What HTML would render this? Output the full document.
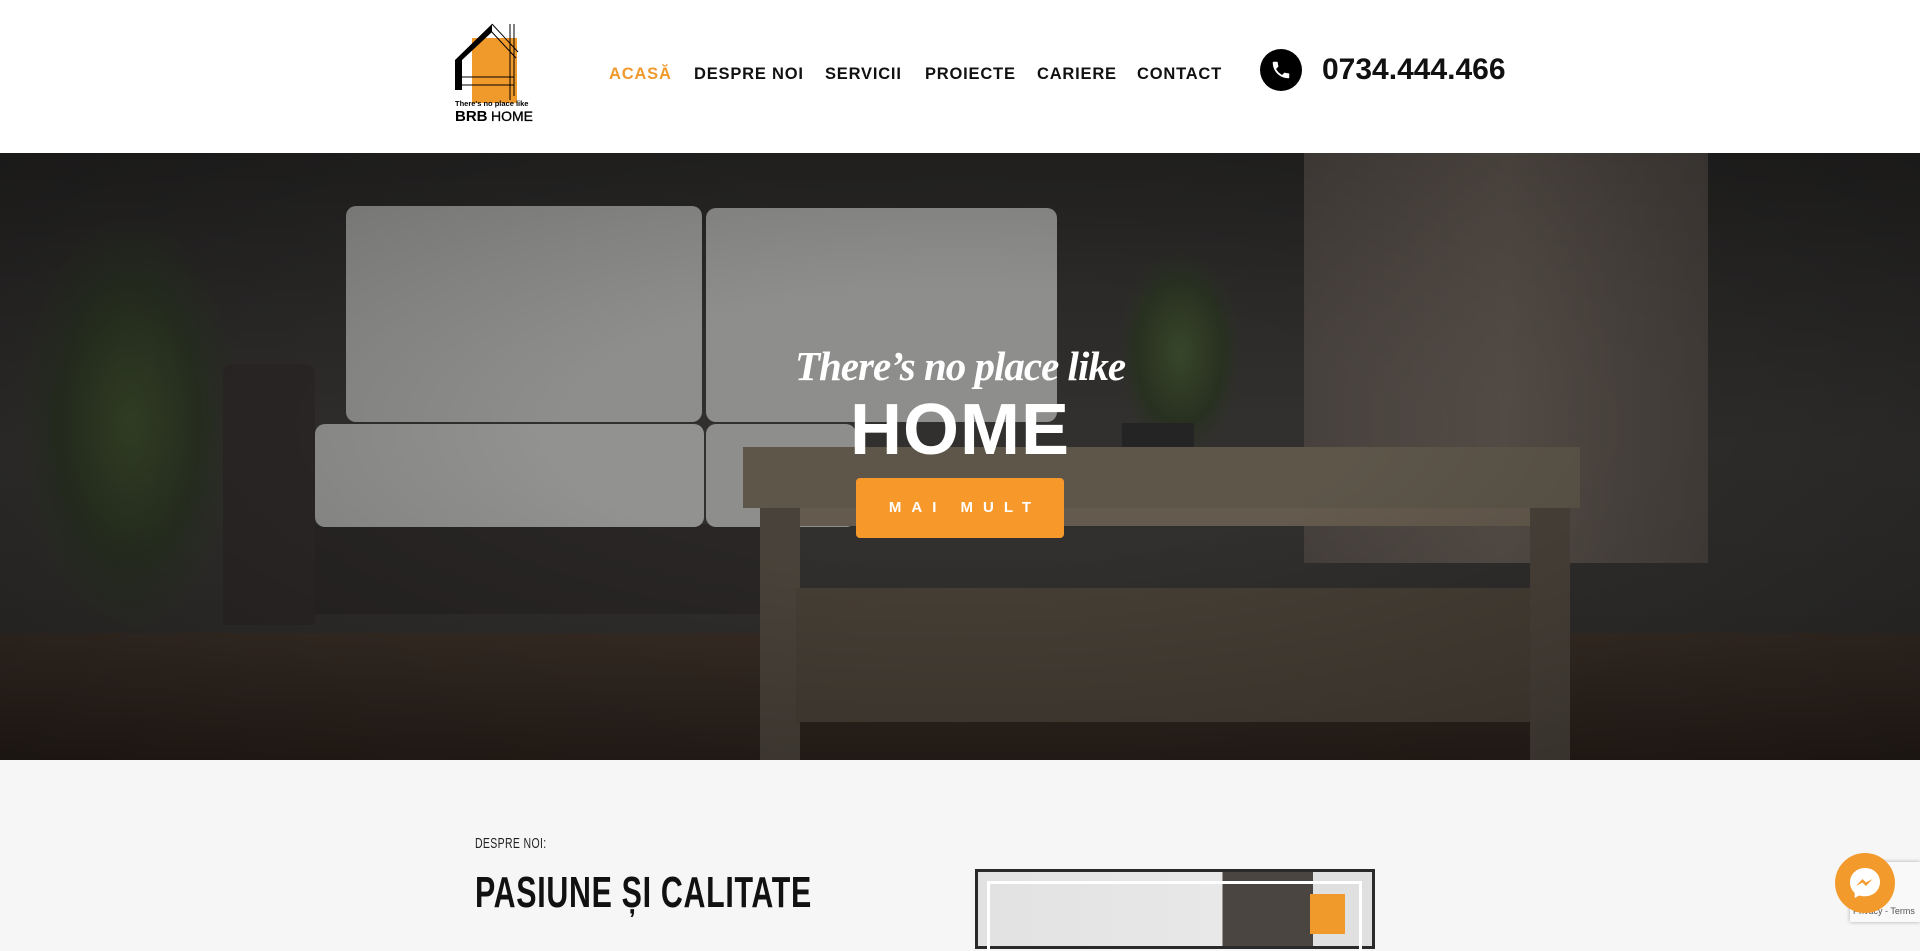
<!DOCTYPE html>
<html><head><meta charset="utf-8">
<style>
*{margin:0;padding:0;box-sizing:border-box}
body{width:1920px;height:938px;overflow:hidden;background:#f6f6f6;font-family:"Liberation Sans",sans-serif;position:relative}
.abs{position:absolute}
header{position:absolute;left:0;top:0;width:1920px;height:153px;background:#fff}
nav a{position:absolute;top:65px;font-size:16.5px;font-weight:bold;color:#111;letter-spacing:.8px;text-decoration:none}
.hero{position:absolute;left:0;top:153px;width:1920px;height:607px;overflow:hidden;background:#383634}
</style></head><body>
<header>
 <svg class="abs" style="left:452px;top:20px" width="88" height="106" viewBox="0 0 88 106">
  <rect x="20" y="18" width="45" height="65" fill="#f09a2c"/>
  <path d="M3 40 L40 4 L40 12 L10 40 L10 70 L3 70 Z" fill="#000"/>
  <path d="M40 4 L66 32 M38 10 L64 38" stroke="#000" stroke-width="1"/>
  <line x1="58" y1="4" x2="58" y2="80" stroke="#000" stroke-width="1"/>
  <line x1="62" y1="4" x2="62" y2="76" stroke="#000" stroke-width="1"/>
  <line x1="8" y1="57" x2="62" y2="57" stroke="#000" stroke-width="1"/>
  <line x1="8" y1="65" x2="62" y2="65" stroke="#000" stroke-width="1"/>
  <text x="3" y="86" font-size="7.5" font-weight="bold" font-family="Liberation Sans" fill="#000">There's no place like</text>
  <text x="3" y="101" font-size="15" font-weight="bold" font-family="Liberation Sans" fill="#000">BRB</text>
  <text x="39" y="101" font-size="14" font-family="Liberation Sans" fill="#000" stroke="#000" stroke-width=".3">HOME</text>
 </svg>
 <nav>
  <a style="left:609px;color:#f09a2c">ACASĂ</a>
  <a style="left:694px">DESPRE NOI</a>
  <a style="left:825px">SERVICII</a>
  <a style="left:925px">PROIECTE</a>
  <a style="left:1037px">CARIERE</a>
  <a style="left:1137px">CONTACT</a>
 </nav>
 <div class="abs" style="left:1260px;top:49px;width:42px;height:42px;border-radius:50%;background:#000"></div>
 <svg class="abs" style="left:1270px;top:59px" width="22" height="22" viewBox="0 0 24 24"><path fill="#fff" d="M6.6 10.8c1.4 2.8 3.8 5.1 6.6 6.6l2.2-2.2c.3-.3.7-.4 1-.2 1.1.4 2.3.6 3.6.6.6 0 1 .4 1 1V20c0 .6-.4 1-1 1C10.6 21 3 13.4 3 4c0-.6.4-1 1-1h3.5c.6 0 1 .4 1 1 0 1.3.2 2.5.6 3.6.1.3 0 .7-.2 1z"/></svg>
 <div class="abs" style="left:1322px;top:53px;font-size:30px;font-weight:bold;color:#111">0734.444.466</div>
</header>
<div class="hero">
 <div class="abs" style="left:0;top:0;width:1920px;height:485px;background:linear-gradient(#262524,#353331 60%,#32302e)"></div>
 <div class="abs" style="left:0;top:480px;width:1920px;height:127px;background:linear-gradient(#3a2f27,#2a211b)"></div>
 <div class="abs" style="left:1304px;top:0;width:404px;height:410px;background:linear-gradient(90deg,#4a4440,#5a524b,#4a4440)"></div>
 <div class="abs" style="left:20px;top:60px;width:220px;height:420px;background:radial-gradient(ellipse,#3a4a2a 0%,#2c3424 45%,transparent 70%)"></div>
 <div class="abs" style="left:223px;top:211px;width:92px;height:261px;background:#2e2a29;border-radius:10px 10px 0 0"></div>
 <div class="abs" style="left:315px;top:371px;width:480px;height:90px;background:#2b2827"></div>
 <div class="abs" style="left:346px;top:53px;width:356px;height:216px;background:#959593;border-radius:10px"></div>
 <div class="abs" style="left:706px;top:55px;width:351px;height:214px;background:#959593;border-radius:10px"></div>
 <div class="abs" style="left:315px;top:271px;width:389px;height:103px;background:#9a9a98;border-radius:10px"></div>
 <div class="abs" style="left:706px;top:271px;width:150px;height:103px;background:#969694;border-radius:10px"></div>
 <div class="abs" style="left:1120px;top:100px;width:120px;height:200px;background:radial-gradient(ellipse,#3a4a2c 0%,#2a3322 50%,transparent 72%)"></div>
 <div class="abs" style="left:1122px;top:270px;width:72px;height:62px;background:#262626"></div>
 <div class="abs" style="left:743px;top:294px;width:837px;height:61px;background:#625a4d"></div>
 <div class="abs" style="left:796px;top:355px;width:734px;height:18px;background:#6a5f52"></div>
 <div class="abs" style="left:760px;top:355px;width:40px;height:252px;background:#4d463d"></div>
 <div class="abs" style="left:1530px;top:355px;width:40px;height:252px;background:#4d463d"></div>
 <div class="abs" style="left:796px;top:435px;width:734px;height:134px;background:#4a4238"></div>
 <div class="abs" style="left:0;top:0;width:1920px;height:607px;background:radial-gradient(ellipse at 50% 45%,rgba(0,0,0,.05) 30%,rgba(0,0,0,.35) 100%)"></div>
 <div class="abs" style="left:0;top:189px;width:1920px;text-align:center;color:#fff;font-family:'Liberation Serif',serif;font-style:italic;font-weight:bold;font-size:41px;letter-spacing:-1px">There’s no place like</div>
 <div class="abs" style="left:0;top:236px;width:1920px;text-align:center;color:#fff;font-weight:bold;font-size:72px;letter-spacing:1px">HOME</div>
 <div class="abs" style="left:856px;top:325px;width:208px;height:60px;background:#f7982b;border-radius:4px;color:#fff;font-weight:bold;font-size:15px;letter-spacing:10px;text-align:center;line-height:60px;padding-left:10px">MAI MULT</div>
</div>
<div class="abs" style="left:475px;top:835px;font-size:15px;color:#222;transform:scaleX(.7);transform-origin:left;letter-spacing:.5px">DESPRE NOI:</div>
<div class="abs" style="left:475px;top:868px;font-size:44px;font-weight:bold;color:#111;transform:scaleX(.69);transform-origin:left;letter-spacing:1px">PASIUNE ȘI CALITATE</div>
<div class="abs" style="left:975px;top:869px;width:400px;height:80px;background:#2a2a2a;padding:3px">
 <div style="width:100%;height:100%;background:linear-gradient(90deg,#e2e2e2 0,#e8e8e8 62%,#4a4540 62%,#4a4540 85%,#e0e0e0 85%)"></div>
 <div class="abs" style="left:12px;top:12px;width:375px;height:70px;border:3px solid #fff;border-bottom:none"></div>
 <div class="abs" style="left:335px;top:25px;width:35px;height:40px;background:#f09a2c"></div>
</div>
<div class="abs" style="left:1850px;top:862px;width:70px;height:60px;background:#f9f9f9;box-shadow:0 0 4px rgba(0,0,0,.3);font-size:9px;color:#555;padding:44px 0 0 3px">Privacy - Terms</div>
<div class="abs" style="left:1835px;top:853px;width:60px;height:60px;border-radius:50%;background:#f39a2c"></div>
<svg class="abs" style="left:1845px;top:863px" width="40" height="40" viewBox="0 0 40 40"><path d="M20 5C11.5 5 5 11.2 5 19.3c0 4.3 1.8 8 4.7 10.6V35l4.5-2.5c1.8.5 3.7.8 5.8.8 8.5 0 15-6.2 15-14.3S28.5 5 20 5z" fill="#fff"/><path d="M11 23l6.5-7 3.5 3.5 6.5-3.5-6.5 7-3.5-3.5z" fill="#f39a2c"/></svg>
</body></html>
